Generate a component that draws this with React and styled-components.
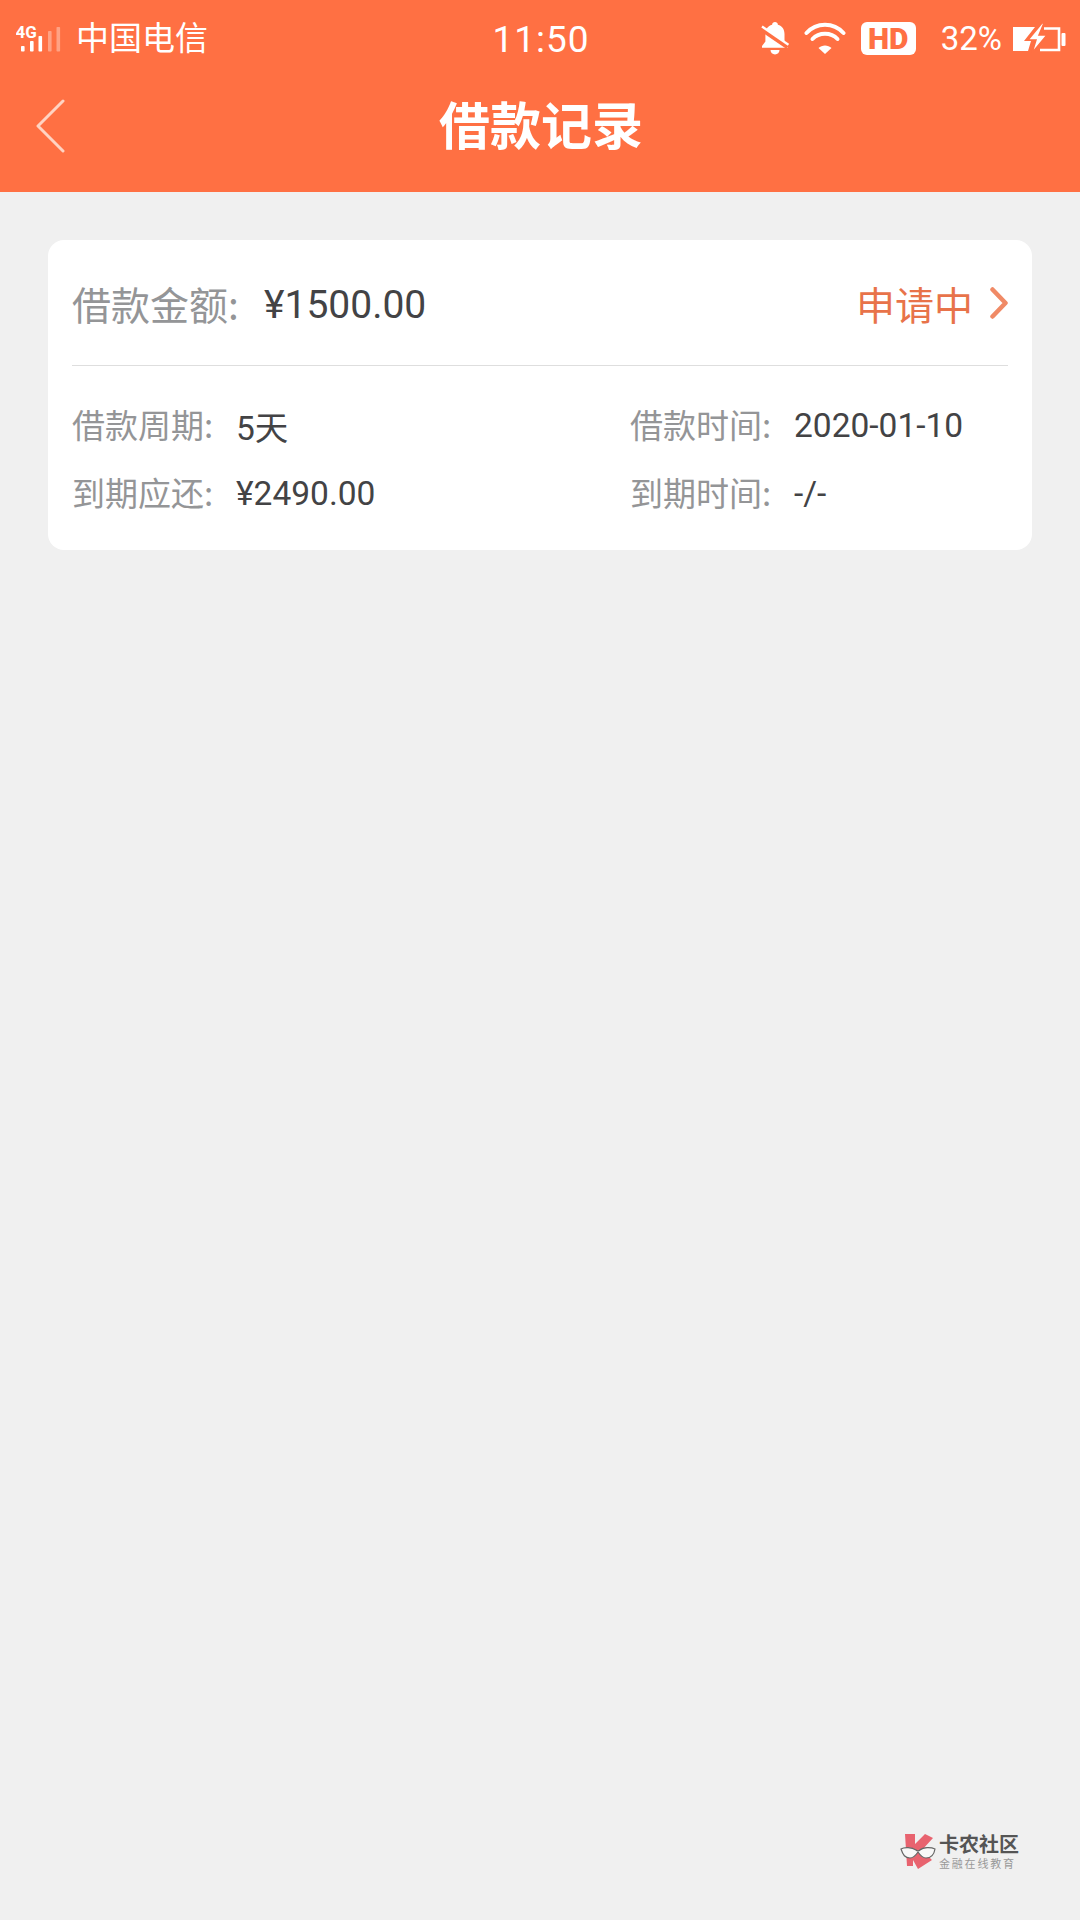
import styled, { createGlobalStyle } from "styled-components"

const cjk = `"Noto Sans CJK SC", sans-serif`
const latin = `Roboto, "Noto Sans CJK SC", sans-serif`

const details = [
  { label: "借款周期:", value: "5天" },
  { label: "借款时间:", value: "2020-01-10" },
  { label: "到期应还:", value: "¥2490.00" },
  { label: "到期时间:", value: "-/-" },
]

function SignalIcon() {
  const bars = [
    { x: 21, top: 43, faded: false },
    { x: 30, top: 38, faded: false },
    { x: 38.5, top: 33, faded: false },
    { x: 48, top: 28, faded: true },
    { x: 56.5, top: 24, faded: true },
  ]
  return (
    <svg width="46" height="34" viewBox="16 18 46 34">
      <text x="15.5" y="35" fontFamily="Roboto, sans-serif" fontWeight="700" fontSize="17" fill="#fff">4G</text>
      {bars.map((b) => (
        <rect key={b.x} x={b.x} y={b.top} width="3.6" height={48.5 - b.top} rx="0.8" fill="#fff" opacity={b.faded ? 0.35 : 1} />
      ))}
    </svg>
  )
}

function BellOffIcon() {
  return (
    <svg width="28" height="33" viewBox="0 0 28 33">
      <path d="M14 0c1.600 0 2.800 1.100 2.900 2.700 4.300 1.200 6.600 4.600 6.600 9.300v7.400l3.500 4.600v1.800H1v-1.800l3.400-4.600V12c0-4.700 2.400-8.100 6.700-9.300C11.200 1.100 12.400 0 14 0z" fill="#fff" />
      <path d="M9.500 28h9c0 2.600-2 4.400-4.500 4.400S9.500 30.600 9.500 28z" fill="#fff" />
      <path d="M0 6.500 27 25" stroke="#ff7043" strokeWidth="5" />
      <path d="M1 4.500 27.500 22.800" stroke="#fff" strokeWidth="2.400" />
    </svg>
  )
}

function WifiIcon() {
  return (
    <svg width="42" height="32" viewBox="0 0 42 32" fill="none" stroke="#fff" strokeWidth="4" strokeLinecap="round">
      <path d="M2.500 11C12.500 0 29.500 0 39.500 11" />
      <path d="M8.500 17C15 10 27 10 33.500 17" />
      <path d="M14.500 26 21 32 27.500 26C24 22.500 18 22.500 14.500 26z" fill="#fff" stroke="none" />
    </svg>
  )
}

function BatteryIcon() {
  return (
    <svg width="53" height="30" viewBox="0 0 53 30">
      <path d="M0 4h22L11 18h7l-3 10H0z" fill="#fff" />
      <path d="M31 5.500H46V27H27" fill="none" stroke="#fff" strokeWidth="2.600" />
      <path d="M29 0 15 17h8l-4 13 15-18h-8l5-12z" fill="#fff" stroke="#ff7043" strokeWidth="1.500" />
      <rect x="48.500" y="10" width="4" height="13" rx="1" fill="#fff" />
    </svg>
  )
}

function BackIcon() {
  return (
    <svg width="30" height="54" viewBox="0 0 30 54" fill="none" stroke="#ffd3c2" strokeWidth="3" strokeLinecap="round" strokeLinejoin="round">
      <path d="M27 2 2 27l25 25" />
    </svg>
  )
}

function ChevronIcon() {
  return (
    <svg width="18" height="32" viewBox="0 0 18 32" fill="none" stroke="#f08a66" strokeWidth="4.500" strokeLinecap="round" strokeLinejoin="round">
      <path d="M2.500 2.500 15.500 16 2.500 29.500" />
    </svg>
  )
}

function LogoMark() {
  return (
    <svg width="36" height="38" viewBox="0 0 36 38">
      <path d="M5 2h10v10L25 2l8 4-11 12 10 10-14 9-5-9v6H7z" fill="#e8636f" />
      <path d="M1 17C4 15 12 15 16 18c1 1 3 1 4 0 3-3 11-3 15-1-1 6-4 9-9 9-4 0-6-3-8-6-2 3-4 6-8 6-5 0-7-3-9-9z" fill="#f8f8f8" stroke="#666" strokeWidth="1.200" />
    </svg>
  )
}

export default function App() {
  return (
    <>
      <GlobalStyle />
      <Page>
        <Header>
          <StatusBar>
            <StatusLeft>
              <SignalIcon />
              <Carrier>中国电信</Carrier>
            </StatusLeft>
            <Clock>11:50</Clock>
            <StatusRight>
              <BellOffIcon />
              <WifiIcon />
              <HdBadge>HD</HdBadge>
              <Percent>32%</Percent>
              <BatteryIcon />
            </StatusRight>
          </StatusBar>
          <NavBar>
            <BackIcon />
            <Title>借款记录</Title>
          </NavBar>
        </Header>

        <Card>
          <CardTop>
            <Amount>
              <AmountLabel>借款金额:</AmountLabel>
              <AmountValue>¥1500.00</AmountValue>
            </Amount>
            <Status>
              申请中
              <ChevronIcon />
            </Status>
          </CardTop>
          <Details>
            {details.map((item) => (
              <DetailItem key={item.label}>
                <DetailLabel>{item.label}</DetailLabel>
                <DetailValue>{item.value}</DetailValue>
              </DetailItem>
            ))}
          </Details>
        </Card>

        <Watermark>
          <LogoMark />
          <WatermarkText>
            <WatermarkName>卡农社区</WatermarkName>
            <WatermarkSlogan>金融在线教育</WatermarkSlogan>
          </WatermarkText>
        </Watermark>
      </Page>
    </>
  )
}

const GlobalStyle = createGlobalStyle`
  html, body {
    margin: 0;
    padding: 0;
    background: #f0f0f0;
  }
  * {
    box-sizing: border-box;
  }
`

const Page = styled.div`
  display: flex;
  flex-direction: column;
  width: 1080px;
  height: 1920px;
  overflow: hidden;
  background: #f0f0f0;
`
const Header = styled.header`
  height: 192px;
  background: #ff7043;
  color: #fff;
`
const StatusBar = styled.div`
  display: grid;
  grid-template-columns: 1fr auto 1fr;
  align-items: center;
  height: 76px;
  padding: 0 14px 0 16px;
`
const StatusLeft = styled.div`
  display: flex;
  align-items: center;
  gap: 14px;
`
const Carrier = styled.span`
  padding-bottom: 4px;
  font-family: ${cjk};
  font-size: 33px;
  line-height: 40px;
  color: #fff;
`
const Clock = styled.span`
  padding-top: 2px;
  font-family: ${latin};
  font-size: 37px;
  letter-spacing: 1px;
  color: #fff;
`
const StatusRight = styled.div`
  display: flex;
  align-items: center;
  justify-content: flex-end;
  gap: 15px;
`
const HdBadge = styled.span`
  width: 55px;
  height: 33px;
  border-radius: 6px;
  background: #fff;
  color: #ff7043;
  font-family: Roboto, sans-serif;
  font-size: 30px;
  font-weight: 900;
  line-height: 33px;
  text-align: center;
`
const Percent = styled.span`
  margin-left: 10px;
  margin-right: -4px;
  font-family: ${latin};
  font-size: 33px;
  color: #fff;
`
const NavBar = styled.nav`
  position: relative;
  display: flex;
  align-items: center;
  justify-content: center;
  height: 116px;
  padding-bottom: 22px;
  svg {
    position: absolute;
    left: 36px;
    top: 23px;
  }
`
const Title = styled.h1`
  margin: 0 0 0 2px;
  font-family: ${cjk};
  font-size: 51px;
  font-weight: 700;
  color: #fff;
`
const Card = styled.section`
  margin: 48px 48px 0;
  height: 310px;
  padding: 0 24px;
  border-radius: 16px;
  background: #fff;
`
const CardTop = styled.div`
  display: flex;
  align-items: center;
  justify-content: space-between;
  height: 126px;
  border-bottom: 1px solid #dedede;
`
const Amount = styled.div`
  display: flex;
  align-items: center;
`
const AmountLabel = styled.span`
  width: 192px;
  font-family: ${cjk};
  font-size: 39px;
  color: #949597;
`
const AmountValue = styled.span`
  padding-top: 4px;
  font-family: ${latin};
  font-size: 39px;
  color: #434345;
`
const Status = styled.div`
  display: flex;
  align-items: center;
  gap: 17px;
  font-family: ${cjk};
  font-size: 39px;
  color: #e8734a;
`
const Details = styled.div`
  display: grid;
  grid-template-columns: 558px 1fr;
  grid-auto-rows: 68px;
  padding-top: 25px;
`
const DetailItem = styled.div`
  display: flex;
  align-items: center;
`
const DetailLabel = styled.span`
  width: 164px;
  padding-bottom: 2px;
  font-family: ${cjk};
  font-size: 33px;
  color: #949597;
`
const DetailValue = styled.span`
  font-family: ${latin};
  font-size: 33.500px;
  color: #434345;
`
const Watermark = styled.footer`
  display: flex;
  align-items: center;
  gap: 3px;
  margin: auto 61px 50px auto;
`
const WatermarkText = styled.div`
  display: flex;
  flex-direction: column;
  gap: 1px;
`
const WatermarkName = styled.span`
  font-family: ${cjk};
  font-size: 20px;
  font-weight: 700;
  line-height: 22px;
  color: #555;
`
const WatermarkSlogan = styled.span`
  font-family: ${cjk};
  font-size: 11px;
  line-height: 14px;
  letter-spacing: 1.800px;
  color: #999;
`
